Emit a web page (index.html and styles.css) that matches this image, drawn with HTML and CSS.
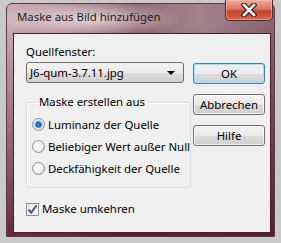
FILE: index.html
```html
<!DOCTYPE html>
<html lang="de">
<head>
    <meta charset="UTF-8">
    <title>Maske aus Bild hinzufügen</title>
    <link rel="stylesheet" href="styles.css">
</head>
<body>
    <div class="window">
        <div class="titlebar">
            <span class="title">Maske aus Bild hinzufügen</span>
            <button class="close" aria-label="Schließen">
                <svg width="16" height="14" viewBox="0 0 16 14">
                    <path d="M3 2 L13 12 M13 2 L3 12" stroke="#3a1a14" stroke-width="5" stroke-linecap="square" fill="none"/>
                    <path d="M3 2 L13 12 M13 2 L3 12" stroke="#fff" stroke-width="2.6" stroke-linecap="square" fill="none"/>
                </svg>
            </button>
        </div>
        <div class="client">
            <div class="left">
                <label class="field-label">Quellfenster:</label>
                <div class="combo">
                    <span>J6-qum-3.7.11.jpg</span>
                    <span class="arrow"></span>
                </div>
                <fieldset class="group">
                    <legend>Maske erstellen aus</legend>
                    <label class="option"><span class="radio checked"></span>Luminanz der Quelle</label>
                    <label class="option"><span class="radio"></span>Beliebiger Wert außer Null</label>
                    <label class="option"><span class="radio"></span>Deckfähigkeit der Quelle</label>
                </fieldset>
                <label class="check-row">
                    <span class="checkbox">
                        <svg width="11" height="11" viewBox="0 0 11 11">
                            <path d="M1.5 5.5 L4.2 8.6 L9.6 1.4" stroke="#3d56a0" stroke-width="2" fill="none"/>
                        </svg>
                    </span>
                    Maske umkehren
                </label>
            </div>
            <div class="buttons">
                <button class="btn default">OK</button>
                <button class="btn">Abbrechen</button>
                <button class="btn">Hilfe</button>
            </div>
        </div>
    </div>
</body>
</html>
```

FILE: styles.css
```css
body {
    margin: 0;
    background-color: #c9c9c9;
    font-family: "Noto Sans", sans-serif;
    font-size: 11.4px;
    color: #000;
}

.window {
    position: relative;
    margin: 3px 0 0 6px;
    width: 269px;
    height: 234px;
    box-sizing: border-box;
    border: 1px solid #5b3a43;
    border-radius: 6px 6px 0 0;
    display: flex;
    flex-direction: column;
    background:
        radial-gradient(ellipse 95px 17px at 80px 15px, rgba(255, 244, 246, 0.7), rgba(255, 244, 246, 0) 100%),
        linear-gradient(to bottom, rgba(75, 12, 28, 0) 8%, rgba(75, 12, 28, 0.8) 100%),
        linear-gradient(to right, #cbaeb5 0%, #b9979f 18%, #8e6a74 48%, #a3848b 72%, #886370 100%);
}

.titlebar {
    height: 29px;
    box-sizing: border-box;
    padding: 5px 0 0 10px;
}

.title {
    line-height: 16px;
    color: #1c1c1c;
    white-space: nowrap;
}

.close {
    position: absolute;
    top: -4px;
    right: 1px;
    width: 48px;
    height: 21px;
    padding: 0;
    border: 1px solid #5a2a22;
    border-top: none;
    border-radius: 0 0 5px 5px;
    background: linear-gradient(to bottom, #eaae9b 0%, #d8785f 45%, #c3412a 55%, #d5684e 100%);
    box-shadow: inset 0 0 0 1px rgba(255, 200, 180, 0.5);
    display: flex;
    align-items: center;
    justify-content: center;
}

.client {
    flex: 1;
    margin: 0 3px 3px 6px;
    background-color: #f0f0f0;
    border: 1px solid #4a1f2b;
    display: flex;
}

.left {
    width: 158px;
    margin-left: 12px;
    padding-top: 10px;
    white-space: nowrap;
}

.field-label {
    display: block;
    line-height: 16px;
}

.combo {
    margin-top: 2px;
    height: 21px;
    box-sizing: border-box;
    border: 1px solid #707070;
    border-radius: 3px;
    background: linear-gradient(to bottom, #f2f2f2 0%, #ebebeb 50%, #dddddd 51%, #cfcfcf 100%);
    display: flex;
    align-items: center;
    justify-content: space-between;
    padding: 0 8px 0 3px;
}

.arrow {
    width: 0;
    height: 0;
    border-left: 4px solid transparent;
    border-right: 4px solid transparent;
    border-top: 4px solid #000;
}

.group {
    margin: 11px 0 0;
    padding: 3px 0 8px 5px;
    border: 1px solid #d5dfe5;
    border-radius: 3px;
    box-shadow: inset 1px 1px 0 #fff;
}

.group legend {
    margin-left: 5px;
    padding: 0 2px;
    line-height: 16px;
}

.option {
    display: flex;
    align-items: center;
    height: 22px;
    gap: 3px;
}

.radio {
    flex: none;
    width: 13px;
    height: 13px;
    box-sizing: border-box;
    border: 1px solid #8f8f8f;
    border-radius: 50%;
    background: radial-gradient(circle at 40% 35%, #ffffff 0%, #f0f0f0 50%, #d4d4d4 100%);
}

.radio.checked {
    background: radial-gradient(circle, #3d8ce0 0%, #1c5fae 35%, #b6d2ee 45%, #f4f7fa 70%, #dcdcdc 100%);
}

.check-row {
    display: flex;
    align-items: center;
    gap: 3px;
    margin-top: 13px;
    line-height: 16px;
}

.checkbox {
    flex: none;
    width: 13px;
    height: 13px;
    box-sizing: border-box;
    border: 1px solid #8e8f8f;
    background: linear-gradient(135deg, #e6e6e6, #ffffff);
    display: flex;
    align-items: center;
    justify-content: center;
}

.buttons {
    margin-left: 9px;
    padding-top: 29px;
    width: 72px;
    display: flex;
    flex-direction: column;
    gap: 10px;
}

.btn {
    height: 21px;
    padding: 0;
    font-family: inherit;
    font-size: inherit;
    color: #000;
    border: 1px solid #707070;
    border-radius: 3px;
    background: linear-gradient(to bottom, #f2f2f2 0%, #ebebeb 50%, #dddddd 51%, #cfcfcf 100%);
    box-shadow: inset 0 0 0 1px rgba(255, 255, 255, 0.7);
}

.btn.default {
    border-color: #3c7fb1;
    box-shadow: inset 0 0 0 1px #a8e0f5;
}
```
